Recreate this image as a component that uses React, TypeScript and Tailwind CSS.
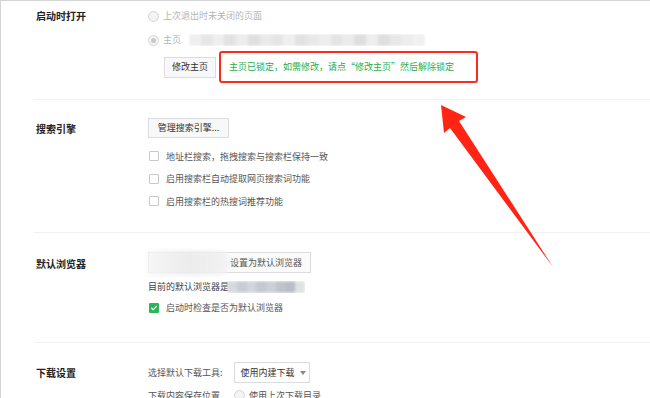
import React from 'react'

const font = { fontFamily: '"Noto Sans CJK SC", "Noto Sans", sans-serif' }

function Radio({ checked = false }: { checked?: boolean }) {
  return (
    <span className="flex h-[11px] w-[11px] shrink-0 items-center justify-center rounded-full border border-[#d6d6d6] bg-[#f4f4f4]">
      {checked && <span className="h-[5px] w-[5px] rounded-full bg-[#c8c8c8]" />}
    </span>
  )
}

function Check({ on = false }: { on?: boolean }) {
  return on ? (
    <span className="flex h-[10px] w-[10px] shrink-0 items-center justify-center rounded-[1px] bg-[#2bb55a]">
      <svg viewBox="0 0 10 10" className="h-[8px] w-[8px]" fill="none" stroke="white" strokeWidth={1.4}>
        <path d="M2 5.2l2 2L8 3" strokeLinecap="round" strokeLinejoin="round" />
      </svg>
    </span>
  ) : (
    <span className="h-[10px] w-[10px] shrink-0 rounded-[1px] border border-[#c9c9c9] bg-white" />
  )
}

function Section({ label, children, className }: { label: string; children: React.ReactNode; className?: string }) {
  return (
    <div className={`flex border-b border-[#f1f1f1] ${className ?? ''}`}>
      <div className="w-[114px] shrink-0 pl-[2px] text-[10px] font-bold text-[#222]">{label}</div>
      <div className="flex flex-col">{children}</div>
    </div>
  )
}

export default function App() {
  const urlBlocks = ['#efefef', '#e6e6e6', '#eeeeee', '#e2e2e2', '#ececec', '#e0e0e0', '#eaeaea', '#e5e5e5', '#efefef', '#e2e2e2', '#e9e9e9', '#eeeeee', '#e4e4e4', '#ebebeb', '#dedede', '#eeeeee', '#dfdfdf', '#e8e8e8', '#ededed', '#f0f0f0']
  const browserBlocks = ['#d6d9de', '#c9ccd3', '#d2d5da', '#c4c8cf', '#cdd0d6', '#bfc3cb', '#b9bdc6', '#dfe1e4']
  return (
    <div style={font} className="relative h-[398px] w-[650px] overflow-hidden border-l border-t border-[#d4d4d4] bg-white">
      <div className="ml-[33px] text-[9px] text-[#555]">
        {/* 启动时打开 */}
        <Section label="启动时打开" className="h-[99px] pt-[7px]">
          <div className="flex h-[16px] items-center gap-[4px] text-[#b5b5b5]">
            <Radio />
            <span>上次退出时未关闭的页面</span>
          </div>
          <div className="mt-[8px] flex h-[16px] items-center gap-[4px] text-[#b5b5b5]">
            <Radio checked />
            <span>主页</span>
            <div className="ml-[4px] h-[12px] w-[236px] overflow-hidden">
              <div className="flex h-full blur-[1.5px]">
                {urlBlocks.map((c, i) => (
                  <span key={i} className="h-full w-[12px]" style={{ background: c }} />
                ))}
              </div>
            </div>
          </div>
          <div className="mt-[3px] flex items-center gap-[3px] pl-[16px]">
            <div className="flex h-[21px] w-[52px] items-center justify-center border border-[#dcdcdc] bg-[#f8f8f8] text-[#333]">
              修改主页
            </div>
            <div className="flex h-[32px] w-[259px] items-center rounded-[3px] border-2 border-[#ff2a1a] pl-[8px] text-[#1fae4b]">
              主页已锁定，如需修改，请点“修改主页”然后解除锁定
            </div>
          </div>
        </Section>

        {/* 搜索引擎 */}
        <Section label="搜索引擎" className="h-[133px] pt-[21px]">
          <div className="-mt-[3px] mb-[6px] flex h-[20px] w-[81px] items-center justify-center border border-[#dcdcdc] bg-[#f8f8f8] text-[#333]">
            管理搜索引擎...
          </div>
          {['地址栏搜索，拖拽搜索与搜索栏保持一致', '启用搜索栏自动提取网页搜索词功能', '启用搜索栏的热搜词推荐功能'].map((t) => (
            <div key={t} className="mt-[2px] flex h-[20.5px] items-center gap-[7px] pl-[1px]">
              <Check />
              <span>{t}</span>
            </div>
          ))}
        </Section>

        {/* 默认浏览器 */}
        <Section label="默认浏览器" className="h-[110px] pt-[23px]">
          <div className="relative -mt-[4px] flex h-[21px] w-[163px] items-center justify-end border border-[#dcdcdc] bg-[#fbfbfb] pr-[8px] text-[#555]">
            设置为默认浏览器
            <div className="absolute -left-[2px] -top-[2px] h-[24px] w-[83px] rounded-r-[10px] bg-gradient-to-r from-[#f6f6f6] via-[#ececec] to-[#f2f2f2] blur-[2px]" />
          </div>
          <div className="mt-[6px] flex h-[16px] items-center text-[#3b4252]">
            <span>目前的默认浏览器是</span>
            <div className="ml-[-2px] h-[12px] w-[78px] overflow-hidden">
              <div className="flex h-full blur-[1.5px]">
                {browserBlocks.map((c, i) => (
                  <span key={i} className="h-full w-[10px]" style={{ background: c }} />
                ))}
              </div>
            </div>
          </div>
          <div className="mt-[5px] flex h-[16px] items-center gap-[7px] pl-[1px]">
            <Check on />
            <span>启动时检查是否为默认浏览器</span>
          </div>
        </Section>

        {/* 下载设置 */}
        <Section label="下载设置" className="pt-[22px]">
          <div className="-mt-[3px] flex items-center gap-[11px]">
            <span>选择默认下载工具:</span>
            <div className="flex h-[21px] w-[76px] items-center gap-[5px] border border-[#dcdcdc] bg-white pl-[6px] text-[#333]">
              使用内建下载
              <svg viewBox="0 0 6 4" className="h-[4px] w-[6px]" fill="#888">
                <path d="M0 0h6L3 4z" />
              </svg>
            </div>
          </div>
          <div className="mt-[6px] flex items-center gap-[14px]">
            <span>下载内容保存位置</span>
            <div className="flex items-center gap-[4px]">
              <Radio />
              <span>使用上次下载目录</span>
            </div>
          </div>
        </Section>
      </div>

      {/* annotation arrow */}
      <svg className="pointer-events-none absolute left-0 top-0 h-[398px] w-[650px]" viewBox="0 0 650 398">
        <polygon points="440,104 465,116 458,120 552,266 449,127 443,132" fill="#ff2414" />
      </svg>
    </div>
  )
}
